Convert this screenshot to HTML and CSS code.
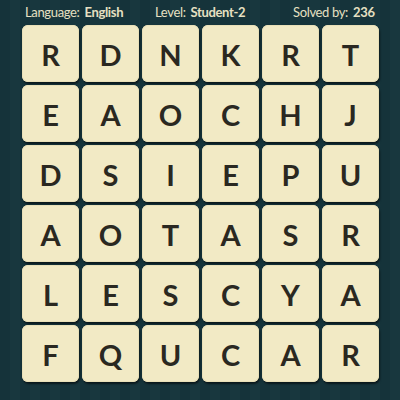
FILE: index.html
```html
<!DOCTYPE html>
<html>
<head>
<meta charset="utf-8">
<link rel="stylesheet" href="styles.css">
</head>
<body>
<div class="page">
  <div class="header">
    <div class="item">Language: <b>English</b></div>
    <div class="item">Level: <b>Student-2</b></div>
    <div class="item">Solved by: <b>236</b></div>
  </div>
  <div class="grid">
    <div class="tile">R</div><div class="tile">D</div><div class="tile">N</div><div class="tile">K</div><div class="tile">R</div><div class="tile">T</div>
    <div class="tile">E</div><div class="tile">A</div><div class="tile">O</div><div class="tile">C</div><div class="tile">H</div><div class="tile">J</div>
    <div class="tile">D</div><div class="tile">S</div><div class="tile">I</div><div class="tile">E</div><div class="tile">P</div><div class="tile">U</div>
    <div class="tile">A</div><div class="tile">O</div><div class="tile">T</div><div class="tile">A</div><div class="tile">S</div><div class="tile">R</div>
    <div class="tile">L</div><div class="tile">E</div><div class="tile">S</div><div class="tile">C</div><div class="tile">Y</div><div class="tile">A</div>
    <div class="tile">F</div><div class="tile">Q</div><div class="tile">U</div><div class="tile">C</div><div class="tile">A</div><div class="tile">R</div>
  </div>
</div>
</body>
</html>
```
FILE: styles.css
```css
html, body {
  margin: 0;
  padding: 0;
}
body {
  width: 400px;
  height: 400px;
  overflow: hidden;
  background-color: #15333a;
  background-image: repeating-linear-gradient(90deg, #15333a 0px, #15333a 10px, #18373e 10px, #18373e 20px);
  font-family: "Lato", "Open Sans", sans-serif;
}
.page {
  width: 400px;
  height: 400px;
}
.header {
  height: 25px;
  display: grid;
  grid-template-columns: 130px 138px auto;
  align-items: center;
  padding: 0 0 0 25px;
  color: #e6e0c2;
  font-size: 13px;
  letter-spacing: -0.35px;
  line-height: 25px;
  box-sizing: border-box;
}
.header b {
  font-weight: 700;
  margin-left: 2px;
}
.grid {
  display: grid;
  grid-template-columns: repeat(6, 57px);
  grid-auto-rows: 57px;
  gap: 3px;
  padding-left: 22px;
}
.tile {
  background: #f2eac5;
  border-radius: 6px;
  box-shadow: 1px 2px 2px rgba(0, 0, 0, 0.55), inset 0 0 0 1px #e9e0b8;
  display: flex;
  align-items: center;
  justify-content: center;
  color: #2a2821;
  font-size: 29px;
  font-weight: 700;
  line-height: 1;
  padding-top: 2px;
  box-sizing: border-box;
}
```
